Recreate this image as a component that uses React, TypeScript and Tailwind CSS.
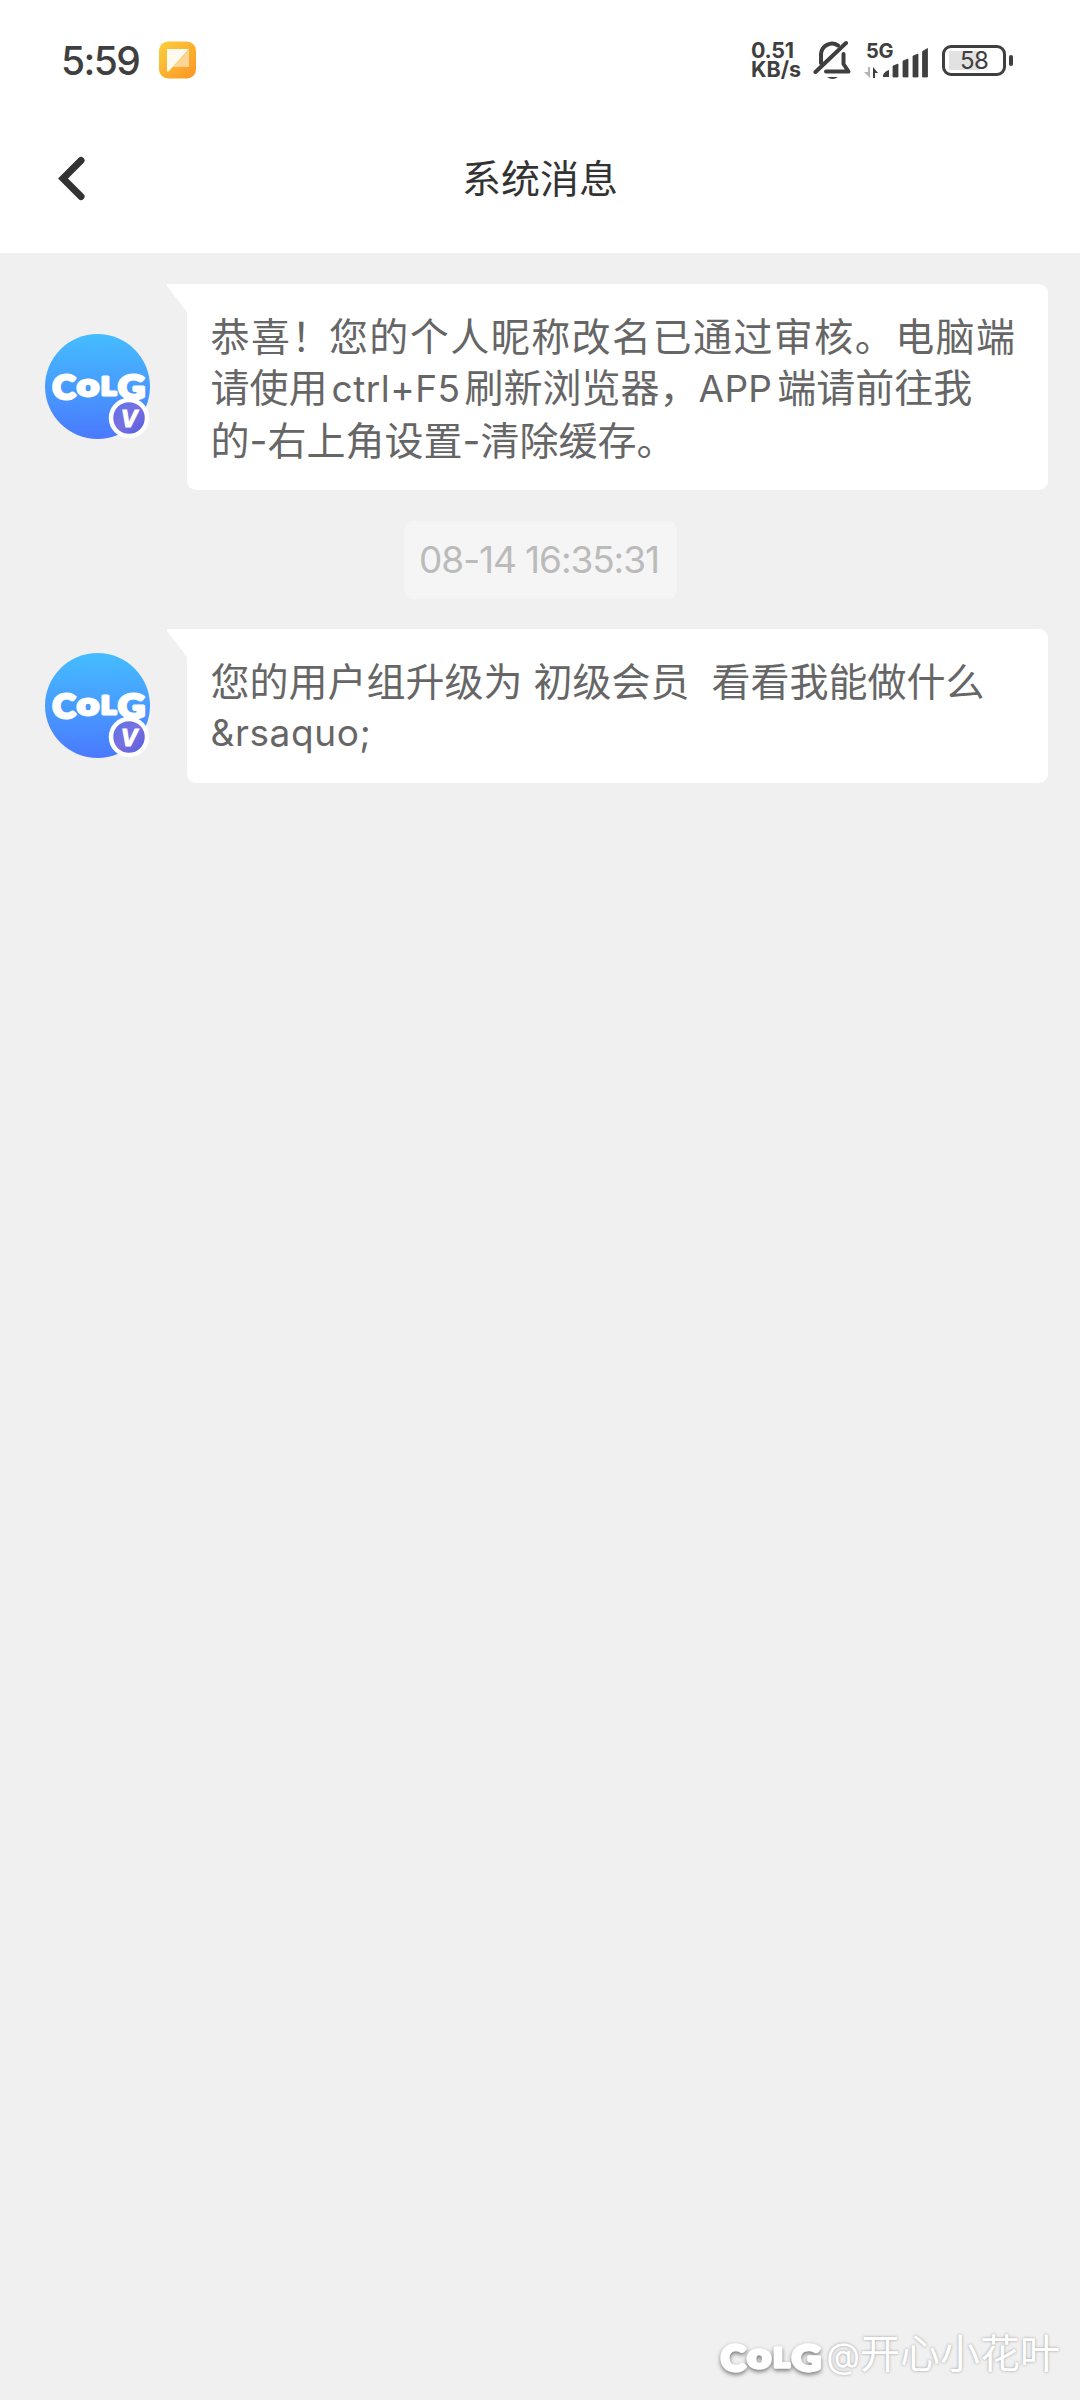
import type { ReactNode } from 'react';

interface MessageProps {
  children: ReactNode;
}

function StatusBar() {
  return (
    <div className="flex h-[120px] items-center justify-between pl-[61px] pr-[67px] text-[#3f3f3f]">
      <div className="flex items-center">
        <span className="w-[98px] whitespace-nowrap text-[39px] font-medium leading-none tracking-[-1.6px]">5:59</span>
        <svg width="38" height="38" viewBox="0 0 38 38">
          <defs>
            <linearGradient id="note" x1="0" y1="0" x2="1" y2="1">
              <stop offset="0" stopColor="#fbd03c" />
              <stop offset="1" stopColor="#fb9423" />
            </linearGradient>
          </defs>
          <rect x="0" y="0.5" width="37" height="37" rx="9" fill="url(#note)" />
          <path d="M30 9v17H14z" fill="#fff" opacity="0.5" />
          <path d="M8 8h22L10 30q-2 2-2-1z" fill="#fffaf0" />
        </svg>
      </div>
      <div className="flex items-center">
        <div className="flex w-[62px] flex-col whitespace-nowrap text-[21.5px] font-bold leading-[19px]">
          <span className="tracking-[-0.3px]">0.51</span>
          <span>KB/s</span>
        </div>
        <svg width="51" height="40" viewBox="0 0 51 40" fill="none" stroke="#3f3f3f" strokeWidth="4" strokeLinecap="round" strokeLinejoin="round">
          <path d="M8 23V14a11 11 0 0 1 17-8.5" />
          <path d="M2.5 32 33 3" />
          <path d="M30.500 14v10l5 7.500H13" />
          <path d="M14 37h11q-5.500 4-11 0z" fill="#3f3f3f" stroke="none" />
        </svg>
        <div className="flex w-[78px] flex-col">
          <span className="h-[16px] pl-[2px] text-[20px] font-bold leading-[16px] tracking-[-0.4px]">5G</span>
          <svg className="mt-[-12px]" width="66" height="31" viewBox="0 0 66 31" fill="#3f3f3f">
            <path d="M4 20h2v11l-6-6h4z" fill="#b5b5b5" />
            <path d="M9 20l5 6h-3v5H9z" />
            <path d="M19 30v-2q2-4 6-5v7z" />
            <path d="M29 19l5-2v13h-5zM39 14l5-2v18h-5zM49 9l5-2v23h-5zM58.500 4.500l5-3v28.500h-5z" stroke="#3f3f3f" strokeWidth="0.8" strokeLinejoin="round" />
          </svg>
        </div>
        <div className="flex items-center gap-[3px]">
          <div className="flex h-[31px] w-[64px] items-center rounded-[9px] border-[3px] border-[#3f3f3f] bg-[linear-gradient(#e2e2e2,#e2e2e2)] bg-[length:31px_19px] bg-[position:4px_3px] bg-no-repeat pl-[15px] pt-px text-[24px] leading-none tracking-[-0.7px]">
            58
          </div>
          <div className="h-[11px] w-[4px] rounded-full bg-[#3f3f3f]" />
        </div>
      </div>
    </div>
  );
}

function Header() {
  return (
    <div className="flex h-[133px] items-center pb-[17px]">
      <div className="flex w-[200px] pl-[55px]">
        <svg width="32" height="48" viewBox="0 0 32 48" fill="none" stroke="#333" strokeWidth="7" strokeLinecap="round" strokeLinejoin="miter">
          <path d="M26 6.500 8 24.500l18 18" />
        </svg>
      </div>
      <h1 className="flex-1 text-center text-[39px] leading-none text-[#333]">系统消息</h1>
      <div className="w-[200px]" />
    </div>
  );
}

function LogoText() {
  return (
    <g fill="#fff" stroke="#fff" strokeWidth="3" strokeLinejoin="round" className="font-['Lato',sans-serif] font-black">
      <text x="7.500" y="65" textLength="23" lengthAdjust="spacingAndGlyphs" className="text-[33px]">C</text>
      <text x="32" y="62" textLength="22" lengthAdjust="spacingAndGlyphs" className="text-[31px]">o</text>
      <text x="56" y="61" textLength="15" lengthAdjust="spacingAndGlyphs" className="text-[24px]">L</text>
      <text x="73" y="65" textLength="27" lengthAdjust="spacingAndGlyphs" className="text-[33px]">G</text>
    </g>
  );
}

function Avatar() {
  return (
    <div className="relative h-[105px] w-[105px] shrink-0 rounded-full bg-linear-to-b from-[#45bdff] to-[#4a79fd]">
      <svg className="absolute inset-0 overflow-visible" width="105" height="105" viewBox="0 0 105 105">
        <defs>
          <linearGradient id="badge" x1="0" y1="0" x2="1" y2="1">
            <stop offset="0" stopColor="#5277ee" />
            <stop offset="0.5" stopColor="#7c6fdf" />
            <stop offset="1" stopColor="#4a5ce2" />
          </linearGradient>
        </defs>
        <LogoText />
        <circle cx="84" cy="84" r="18" fill="url(#badge)" stroke="#fff" strokeWidth="4.5" />
        <text x="84" y="92.500" textAnchor="middle" fill="#fff" stroke="#fff" strokeWidth="1" className="text-[23px] font-bold italic">V</text>
      </svg>
    </div>
  );
}

function Message({ children }: MessageProps) {
  return (
    <div className="flex items-center pl-[45px] pr-[32px]">
      <Avatar />
      <div className="relative ml-[37px] flex-1 rounded-[9px] rounded-tl-none bg-white pb-[24px] pl-[23.5px] pt-[27px] text-[39px] leading-[51.6px] text-[#666]">
        <svg className="absolute left-[-20px] top-0" width="21" height="28" viewBox="0 0 21 28">
          <path d="M0 0h21v28h-1L0 2z" fill="#fff" />
        </svg>
        {children}
      </div>
    </div>
  );
}

export default function App() {
  return (
    <div className="relative flex h-[2400px] w-[1080px] flex-col bg-white font-['Inter','Noto_Sans_CJK_SC',sans-serif]">
      <StatusBar />
      <Header />
      <div className="flex flex-1 flex-col bg-[#f0f0f0] pt-[30.5px]">
        <Message>
          <p className="whitespace-nowrap tracking-[1.45px]">
            恭喜<span className="tracking-[-1.5px]">！</span>您的个人昵称改名已通过审核。电脑端
          </p>
          <p className="whitespace-nowrap">
            请使用<span className="ml-[4px] mr-[4px] text-[37px] tracking-[0.5px]">ctrl+F5</span>刷新浏览器，<span className="mr-[5px] text-[37px] tracking-[0.3px]">APP</span>端请前往我
          </p>
          <p className="whitespace-nowrap">的-右上角设置-清除缓存。</p>
        </Message>
        <div className="mx-auto mb-[30px] mt-[30.5px] flex h-[78px] w-[273px] items-center justify-center whitespace-nowrap rounded-[9px] bg-[#f5f5f5] pb-px pr-[2px] text-[37px] tracking-[-1.1px] text-[#bbb]">
          08-14 16:35:31
        </div>
        <Message>
          <p className="whitespace-pre">您的用户组升级为 初级会员  看看我能做什么</p>
          <p className="text-[37px] tracking-[0.6px]">&amp;rsaquo;</p>
        </Message>
      </div>
      <div className="absolute bottom-[20px] right-[20px] flex items-center text-white">
        <svg className="mr-[5px] mt-[5px] overflow-visible drop-shadow-[0_2px_2px_rgba(0,0,0,0.5)]" width="103" height="34" viewBox="5 37 95 30">
          <LogoText />
        </svg>
        <span className="whitespace-nowrap text-[40px] leading-[50px] [text-shadow:0_0_3px_#999]">
          <span className="text-[35px]">@</span>开心小花叶
        </span>
      </div>
    </div>
  );
}
